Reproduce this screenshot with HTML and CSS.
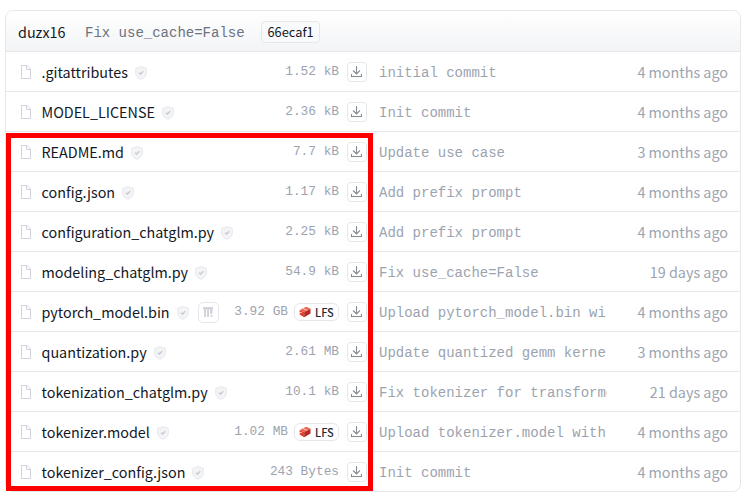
FILE: index.html
```html
<!DOCTYPE html>
<html lang="en">
<head>
<meta charset="utf-8">
<title>Files</title>
<link rel="stylesheet" href="styles.css">
</head>
<body>
<svg width="0" height="0" class="defs" aria-hidden="true">
  <symbol id="file" viewBox="0 0 10 14"><path d="M.5.5H6L9.500 4V13.500H.5ZM5.500.5V4.500H9.500" fill="none" stroke="#d1d5db"/></symbol>
  <symbol id="shield" viewBox="0 0 12 14"><path d="M6 .6 11.300 2.300V7C11.300 10.100 9.200 12 6 13.300 2.800 12 .7 10.100.7 7V2.300Z" fill="#f3f4f6" stroke="#e5e7eb" stroke-width=".9"/><path d="M4 6.800 5.500 8.200 8.200 5.300" fill="none" stroke="#c3c8d0" stroke-width="1.300"/></symbol>
  <symbol id="down" viewBox="0 0 12 12"><path d="M5.500 0V7.500M2 4.500 5.500 8 9 4.500M.5 8V10.500H10.500V8" fill="none" stroke="#858b99" stroke-width="1.100"/></symbol>
  <symbol id="pickle" viewBox="0 0 10 10"><path d="M0 0H10V2.400H0ZM1 2.400H3V10H1ZM4 2.400H6V10H4ZM7 2.400H9.500V6.800H7ZM7.500 7.800H9.500V9.800H7.500Z" fill="#d1d5db"/></symbol>
  <symbol id="lfs" viewBox="0 0 12 12"><path d="M.5 4.200 7 .8 11.500 2.700 5.200 6.100Z" fill="#f0604d"/><path d="M.5 4.200 5.200 6.100V11.200L.8 8.700Z" fill="#e5402e"/><path d="M5.200 6.100 11.500 2.700V7.600L5.200 11.200Z" fill="#b52a20"/><path d="M4.200 2.600 8.200 4.400M.5 6.600 2.800 6.500" fill="none" stroke="#fff" stroke-width=".7"/></symbol>
</svg>
<main class="files">
  <header class="head"><span class="author">duzx16</span><span class="title">Fix use_cache=False</span><span class="hash">66ecaf1</span></header>
  <div class="row"><div class="name"><svg class="file"><use href="#file"/></svg><span>.gitattributes</span><svg class="shield"><use href="#shield"/></svg></div><div class="size">1.52 kB</div><div class="dl"><svg><use href="#down"/></svg></div><div class="msg">initial commit</div><div class="date">4 months ago</div></div>
  <div class="row"><div class="name"><svg class="file"><use href="#file"/></svg><span>MODEL_LICENSE</span><svg class="shield"><use href="#shield"/></svg></div><div class="size">2.36 kB</div><div class="dl"><svg><use href="#down"/></svg></div><div class="msg">Init commit</div><div class="date">4 months ago</div></div>
  <div class="row"><div class="name"><svg class="file"><use href="#file"/></svg><span>README.md</span><svg class="shield"><use href="#shield"/></svg></div><div class="size">7.7 kB</div><div class="dl"><svg><use href="#down"/></svg></div><div class="msg">Update use case</div><div class="date">3 months ago</div></div>
  <div class="row"><div class="name"><svg class="file"><use href="#file"/></svg><span>config.json</span><svg class="shield"><use href="#shield"/></svg></div><div class="size">1.17 kB</div><div class="dl"><svg><use href="#down"/></svg></div><div class="msg">Add prefix prompt</div><div class="date">4 months ago</div></div>
  <div class="row"><div class="name"><svg class="file"><use href="#file"/></svg><span>configuration_chatglm.py</span><svg class="shield"><use href="#shield"/></svg></div><div class="size">2.25 kB</div><div class="dl"><svg><use href="#down"/></svg></div><div class="msg">Add prefix prompt</div><div class="date">4 months ago</div></div>
  <div class="row"><div class="name"><svg class="file"><use href="#file"/></svg><span>modeling_chatglm.py</span><svg class="shield"><use href="#shield"/></svg></div><div class="size">54.9 kB</div><div class="dl"><svg><use href="#down"/></svg></div><div class="msg">Fix use_cache=False</div><div class="date">19 days ago</div></div>
  <div class="row"><div class="name"><svg class="file"><use href="#file"/></svg><span>pytorch_model.bin</span><svg class="shield"><use href="#shield"/></svg><div class="pickle"><svg><use href="#pickle"/></svg></div></div><div class="size">3.92 GB<div class="lfs"><svg><use href="#lfs"/></svg>LFS</div></div><div class="dl"><svg><use href="#down"/></svg></div><div class="msg">Upload pytorch_model.bin wit</div><div class="date">4 months ago</div></div>
  <div class="row"><div class="name"><svg class="file"><use href="#file"/></svg><span>quantization.py</span><svg class="shield"><use href="#shield"/></svg></div><div class="size">2.61 MB</div><div class="dl"><svg><use href="#down"/></svg></div><div class="msg">Update quantized gemm kernel</div><div class="date">3 months ago</div></div>
  <div class="row"><div class="name"><svg class="file"><use href="#file"/></svg><span>tokenization_chatglm.py</span><svg class="shield"><use href="#shield"/></svg></div><div class="size">10.1 kB</div><div class="dl"><svg><use href="#down"/></svg></div><div class="msg">Fix tokenizer for transforme</div><div class="date">21 days ago</div></div>
  <div class="row"><div class="name"><svg class="file"><use href="#file"/></svg><span>tokenizer.model</span><svg class="shield"><use href="#shield"/></svg></div><div class="size">1.02 MB<div class="lfs"><svg><use href="#lfs"/></svg>LFS</div></div><div class="dl"><svg><use href="#down"/></svg></div><div class="msg">Upload tokenizer.model with</div><div class="date">4 months ago</div></div>
  <div class="row"><div class="name"><svg class="file"><use href="#file"/></svg><span>tokenizer_config.json</span><svg class="shield"><use href="#shield"/></svg></div><div class="size">243 Bytes</div><div class="dl"><svg><use href="#down"/></svg></div><div class="msg">Init commit</div><div class="date">4 months ago</div></div>
  <div class="highlight"></div>
</main>
</body>
</html>
```
FILE: styles.css
```css
* { box-sizing: border-box; }
body {
  margin: 0;
  padding: 10px 6px 8px 5px;
  background: #fff;
  font: 14.35px/20px "Noto Sans CJK SC", "Open Sans", sans-serif;
  color: #111827;
}
svg { display: block; flex: none; }
.defs { position: absolute; }
.files {
  position: relative;
  height: 482px;
  border: 1px solid #e5e7eb;
  border-radius: 8px;
}
.head {
  height: 40px;
  display: flex;
  align-items: center;
  padding: 2px 11px 0 12px;
  border-radius: 7px 7px 0 0;
  background: linear-gradient(#fff, #f3f4f6);
}
.author { width: 67px; }
.title {
  width: 176px;
  padding-top: 2px;
  font: 14px/20px "Liberation Mono", monospace;
  color: #6b7280;
}
.hash {
  height: 22px;
  padding: 0 5.5px;
  border: 1px solid #e5e7eb;
  border-radius: 4px;
  background: #f9fafb;
  font-size: 12.8px;
}
.row {
  height: 40px;
  display: grid;
  grid-template-columns: 208px 110px 28px 240px 1fr;
  align-items: center;
  padding: 1px 12px 0 15px;
  border-top: 1px solid #e5e7eb;
  white-space: nowrap;
}
.name { display: flex; align-items: center; }
.file { width: 10px; height: 14px; margin-right: 10.5px; }
.shield { width: 12px; height: 14px; margin: 1px 0 0 7px; }
.pickle {
  width: 21px;
  height: 21px;
  margin-left: 9px;
  display: grid;
  place-items: center;
  border: 1px solid #e5e7eb;
  border-radius: 5px;
}
.pickle svg { width: 10px; height: 10px; }
.size {
  display: flex;
  align-items: center;
  justify-content: flex-end;
  font: 12.8px/20px "Liberation Mono", monospace;
  color: #9ca3af;
}
.lfs {
  width: 45px;
  height: 18px;
  margin-left: 6px;
  display: flex;
  align-items: center;
  gap: 4px;
  padding-left: 4px;
  border: 1px solid #e5e7eb;
  border-radius: 6px;
  font: 500 11px/16px "Noto Sans CJK SC", sans-serif;
  color: #1f2937;
}
.lfs svg { width: 12px; height: 12px; }
.dl {
  width: 20px;
  height: 20px;
  margin-left: 8px;
  display: grid;
  place-items: center;
  border: 1px solid #e5e7eb;
  border-radius: 4px;
}
.dl svg { width: 12px; height: 12px; }
.msg {
  width: 228px;
  margin-left: 12px;
  padding-top: 2px;
  overflow: hidden;
  font: 14px/20px "Liberation Mono", monospace;
  color: #9ca3af;
}
.date { text-align: right; color: #9ca3af; }
.highlight {
  position: absolute;
  left: 0;
  top: 122px;
  width: 367px;
  height: 358px;
  border: 5px solid #f00;
}
```
